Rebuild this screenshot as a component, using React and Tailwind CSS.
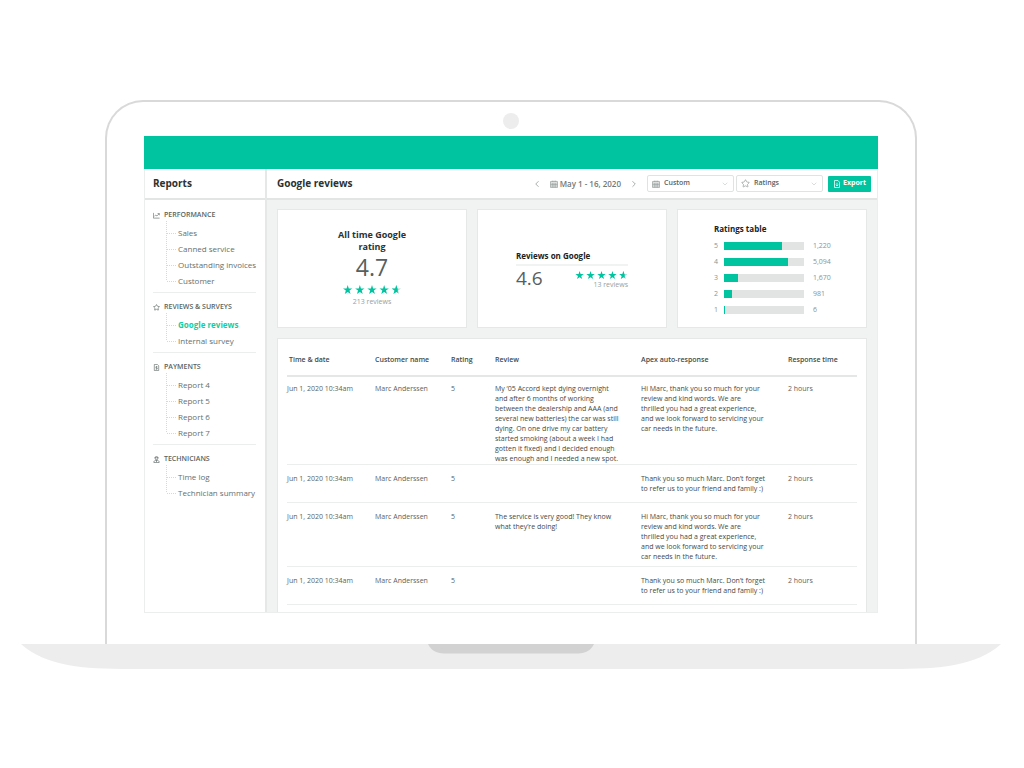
import React from "react";
import { ChevronLeft, ChevronRight, ChevronDown, Star } from "lucide-react";

// --- Icons ---

const ChartIcon = () => (
  <svg viewBox="0 0 16 16" className="h-[7px] w-[7px]" fill="none" stroke="currentColor" strokeWidth="1.4">
    <path d="M1 2v12h14" />
    <path d="M3 10l3-3 3 2 5-5M10.500 3.500H14.500V7.500" />
  </svg>
);

const StarIcon = () => <Star className="h-[7px] w-[7px]" strokeWidth={2.2} />;

const InvoiceIcon = () => (
  <svg viewBox="0 0 16 16" className="h-[7px] w-[7px]" fill="none" stroke="currentColor" strokeWidth="1.4">
    <path d="M3 1h7l3 3v11H3z" />
    <path d="M10 6H7.500a1.200 1.200 0 0 0 0 2.700h1.300a1.200 1.200 0 0 1 0 2.700H6M8.200 4.500v8.500" strokeWidth="1.200" />
  </svg>
);

const TechnicianIcon = () => (
  <svg viewBox="0 0 16 16" className="h-[7px] w-[7px]" fill="none" stroke="currentColor" strokeWidth="1.5">
    <path d="M5 4a3 3 0 0 1 6 0v1.500a3 3 0 0 1-6 0zM3.500 4h9" />
    <path d="M2 15v-1.500c0-2 2-3 4-3.500h4c2 .5 4 1.500 4 3.500V15zM8 10v4" />
  </svg>
);

const CalendarIcon = () => (
  <svg viewBox="0 0 16 16" className="h-2 w-2 shrink-0" fill="none" stroke="currentColor" strokeWidth="1.2">
    <path d="M1 3h14v12H1zM1 6h14M4.500 1v3M8 1v3M11.500 1v3M4.500 6v9M8 6v9M11.500 6v9M1 9h14M1 12h14" />
  </svg>
);

const ExportIcon = () => (
  <svg viewBox="0 0 16 16" className="h-2 w-2" fill="none" stroke="currentColor" strokeWidth="1.500">
    <path d="M3 1h7l3 3.500V15H3zM8 5.500v6M5.500 9.500L8 12l2.500-2.500" />
  </svg>
);

const STAR_PATH = "M10 0l2.400 7.200H20l-6.100 4.500 2.300 7.300L10 14.600 3.800 19l2.300-7.300L0 7.200h7.600z";

const Stars = ({ className }) => (
  <svg viewBox="0 0 124 19" className={className} role="img" aria-label="Rating in stars">
    {[0, 1, 2, 3].map((i) => (
      <path key={i} d={STAR_PATH} fill="#00c4a0" transform={`translate(${i * 26} 0)`} />
    ))}
    <path d={STAR_PATH} fill="#b3ddd4" transform="translate(104 0)" />
    <clipPath id="partial-star">
      <rect width="13" height="19" />
    </clipPath>
    <g transform="translate(104 0)">
      <path d={STAR_PATH} fill="#00c4a0" clipPath="url(#partial-star)" />
    </g>
  </svg>
);

// --- Data ---

const sections = [
  { title: "PERFORMANCE", icon: ChartIcon, items: ["Sales", "Canned service", "Outstanding invoices", "Customer"] },
  { title: "REVIEWS & SURVEYS", icon: StarIcon, items: ["Google reviews", "Internal survey"] },
  { title: "PAYMENTS", icon: InvoiceIcon, items: ["Report 4", "Report 5", "Report 6", "Report 7"] },
  { title: "TECHNICIANS", icon: TechnicianIcon, items: ["Time log", "Technician summary"] },
];

const ratings = [
  { stars: 5, count: "1,220", percent: 73 },
  { stars: 4, count: "5,094", percent: 80 },
  { stars: 3, count: "1,670", percent: 18 },
  { stars: 2, count: "981", percent: 10 },
  { stars: 1, count: "6", percent: 1 },
];

const columns = [
  { label: "Time & date", width: "w-[88px]" },
  { label: "Customer name", width: "w-[76px]" },
  { label: "Rating", width: "w-[44px]" },
  { label: "Review", width: "w-[146px]" },
  { label: "Apex auto-response", width: "w-[147px]" },
  { label: "Response time", width: "w-[69px]" },
];

const longReply =
  "Hi Marc, thank you so much for your review and kind words. We are\nthrilled you had a great experience, and we look forward to servicing your car needs in the future.";
const shortReply = "Thank you so much Marc. Don’t forget to refer us to your friend and family :)";

const reviews = [
  {
    review:
      "My ‘05 Accord kept dying overnight and after 6 months of working between the dealership and AAA (and several new batteries) the car was still dying. On one drive my car battery started smoking (about a week I had gotten it fixed) and I decided enough was enough and I needed a new spot.",
    reply: longReply,
    padding: "pt-[7px]",
  },
  { review: "", reply: shortReply, padding: "pt-[9px] pb-2" },
  { review: "The service is very good! They know what they’re doing!", reply: longReply, padding: "pt-[9px] pb-1" },
  { review: "", reply: shortReply, padding: "pt-[9px] pb-2" },
];

// --- Sidebar ---

const Connector = ({ first, last }) => (
  <svg viewBox="0 0 12 16" className="h-4 w-3 shrink-0 overflow-visible" stroke="#d5d9d8" strokeDasharray="1 1">
    <path d={`M0.500 ${first ? -4 : 0}V${last ? 8 : 16}M1 8.500H10`} fill="none" />
  </svg>
);

const Sidebar = () => (
  <aside className="w-[122px] shrink-0 border-r-2 border-[#e6e8e8]">
    <h2 className="flex h-[31px] items-center border-b-2 border-[#e3e5e5] pl-2 text-[10px] font-bold text-[#2b3231]">
      Reports
    </h2>
    <nav className="pl-2 pr-[9px] pt-px">
      {sections.map((section) => (
        <div key={section.title} className="border-b border-[#eceeee] pt-2 pb-[3px] last:border-0">
          <h3 className="mb-1 flex h-3 items-center gap-1 whitespace-nowrap text-[7px] font-semibold text-[#5a6462]">
            <section.icon />
            {section.title}
          </h3>
          <ul className="pl-[13px]">
            {section.items.map((item, i) => (
              <li key={item} className="flex h-4 items-center">
                <Connector first={i === 0} last={i === section.items.length - 1} />
                <a
                  href="#"
                  className={
                    item === "Google reviews"
                      ? "whitespace-nowrap text-[8px] font-bold text-[#0fcfa6]"
                      : "whitespace-nowrap text-[8px] text-[#65706e]"
                  }
                >
                  {item}
                </a>
              </li>
            ))}
          </ul>
        </div>
      ))}
    </nav>
  </aside>
);

// --- Toolbar ---

const FilterSelect = ({ icon, label }) => (
  <label className="flex h-[17px] w-[87px] items-center gap-1 rounded-[2px] border border-[#dfe3e2] px-1 text-[#8a9492]">
    {icon}
    <select aria-label={label} className="min-w-0 flex-1 appearance-none text-[7px] font-semibold text-[#58625f] outline-none">
      <option>{label}</option>
    </select>
    <ChevronDown className="h-2 w-2 shrink-0 text-[#b4bbb9]" strokeWidth={1.5} />
  </label>
);

const Toolbar = () => (
  <header className="flex h-[31px] items-center border-b-2 border-[#e3e5e5] pl-[10px] pr-[6px]">
    <h1 className="flex-1 text-[10px] font-bold text-[#2b3231]">Google reviews</h1>
    <div className="flex items-center text-[#8a9492]">
      <button aria-label="Previous period">
        <ChevronLeft className="h-[10px] w-[10px]" strokeWidth={1.8} />
      </button>
      <div className="mx-2 flex items-center gap-[2px]">
        <CalendarIcon />
        <span className="text-[8px] font-semibold text-[#6f7977]">May 1 - 16, 2020</span>
      </div>
      <button aria-label="Next period">
        <ChevronRight className="h-[10px] w-[10px]" strokeWidth={1.8} />
      </button>
    </div>
    <div className="ml-2 flex items-center gap-[2px]">
      <FilterSelect icon={<CalendarIcon />} label="Custom" />
      <FilterSelect icon={<Star className="h-[9px] w-[9px] shrink-0" strokeWidth={1.8} />} label="Ratings" />
    </div>
    <button className="ml-[5px] flex h-4 w-[43px] items-center justify-center gap-[2px] rounded-[1px] bg-[#00c4a0] text-[7px] font-bold text-white">
      <ExportIcon />
      Export
    </button>
  </header>
);

// --- Summary cards ---

const SummaryCards = () => (
  <div className="grid grid-cols-3 gap-[10px]">
    <section className="flex h-[119px] flex-col items-center border border-[#e5e8e7] bg-white pt-[19px] text-center">
      <h2 className="w-20 text-[9px] leading-3 font-bold text-[#2b3231]">All time Google rating</h2>
      <p className="text-[23px] leading-7 font-medium text-[#56605e]">4.7</p>
      <Stars className="mt-1 h-[9px] w-[58px]" />
      <p className="mt-[3px] text-[7px] leading-[10px] text-[#98a09e]">213 reviews</p>
    </section>

    <section className="h-[119px] border border-[#e5e8e7] bg-white px-[38px] pt-10">
      <h2 className="border-b-2 border-[#f1f2f2] pb-[2px] text-[8px] leading-3 font-bold text-[#1d2221]">
        Reviews on Google
      </h2>
      <div className="flex items-start justify-between">
        <p className="text-[19px] leading-6 font-medium text-[#56605e]">4.6</p>
        <div className="flex flex-col items-end pt-[5px]">
          <Stars className="h-2 w-[53px]" />
          <p className="mt-px text-[7px] leading-[10px] text-[#98a09e]">13 reviews</p>
        </div>
      </div>
    </section>

    <section className="h-[119px] border border-[#e5e8e7] bg-white pr-[35px] pl-9 pt-[13px]">
      <h2 className="mb-[3px] text-[8px] leading-3 font-bold text-[#1d2221]">Ratings table</h2>
      {ratings.map((row) => (
        <div key={row.stars} className="flex h-4 items-center text-[7px] text-[#8b9492]">
          <span className="w-[10px]">{row.stars}</span>
          <div className="h-2 flex-1 bg-[#e2e4e3]">
            <div className="h-2 bg-[#00c4a0]" style={{ width: `${row.percent}%` }} />
          </div>
          <span className="w-[27px] pl-[9px]">{row.count}</span>
        </div>
      ))}
    </section>
  </div>
);

// --- Reviews table ---

const ReviewsTable = () => (
  <section className="mt-[10px] border border-b-0 border-[#e5e8e7] bg-white px-[9px] pb-[7px]">
    <table className="w-full table-fixed text-left text-[7px] leading-[10px] text-[#424b49]">
      <thead>
        <tr className="h-[37px] border-b-2 border-[#e5e7e7]">
          {columns.map((column) => (
            <th key={column.label} className={`${column.width} pt-[5px] pb-0 font-semibold whitespace-nowrap first:pl-[2px]`}>
              {column.label}
            </th>
          ))}
        </tr>
      </thead>
      <tbody>
        {reviews.map((row, i) => (
          <tr key={i} className="border-b border-[#eceeee] align-top">
            <td className={`${row.padding} text-[#5a6462]`}>Jun 1, 2020 10:34am</td>
            <td className={`${row.padding} text-[#5a6462]`}>Marc Anderssen</td>
            <td className={`${row.padding} text-[#5a6462]`}>5</td>
            <td className={`${row.padding} pr-5`}>{row.review}</td>
            <td className={`${row.padding} pr-5 whitespace-pre-line`}>{row.reply}</td>
            <td className={`${row.padding} text-[#5a6462]`}>2 hours</td>
          </tr>
        ))}
      </tbody>
    </table>
  </section>
);

// --- Laptop frame ---

const BaseCorner = ({ className }) => (
  <svg viewBox="0 0 110 25" className={`h-[25px] w-[110px] shrink-0 ${className}`} fill="#ededed">
    <path d="M0 0C25 22 60 25 110 25V0z" />
  </svg>
);

export default function App() {
  return (
    <div className="min-h-screen bg-white pt-[100px] pr-[23px] pb-10 pl-[21px] font-['Open_Sans',sans-serif]">
      <div className="mx-[84px] rounded-t-[38px] border-2 border-b-0 border-[#d9d9d9] px-[37px] pt-[11px] pb-[31px]">
        <div className="mx-auto mb-[7px] h-4 w-4 rounded-full bg-[#ededed]" />
        <div className="border border-t-0 border-[#eceeee]">
          <div className="-mx-px h-[33px] bg-[#00c4a0]" />
          <div className="flex">
            <Sidebar />
            <div className="flex min-w-0 flex-1 flex-col">
              <Toolbar />
              <main className="flex-1 bg-[#f0f3f2] px-[10px] pt-[9px]">
                <SummaryCards />
                <ReviewsTable />
              </main>
            </div>
          </div>
        </div>
      </div>
      <div className="flex">
        <BaseCorner className="" />
        <div className="-mx-px flex h-[25px] flex-1 justify-center bg-[#ededed]">
          <svg viewBox="0 0 166 10" className="h-[10px] w-[166px]" fill="#d2d2d2">
            <path d="M0 0C3 6 8 9.500 16 9.500H150C158 9.500 163 6 166 0z" />
          </svg>
        </div>
        <BaseCorner className="-scale-x-100" />
      </div>
    </div>
  );
}
